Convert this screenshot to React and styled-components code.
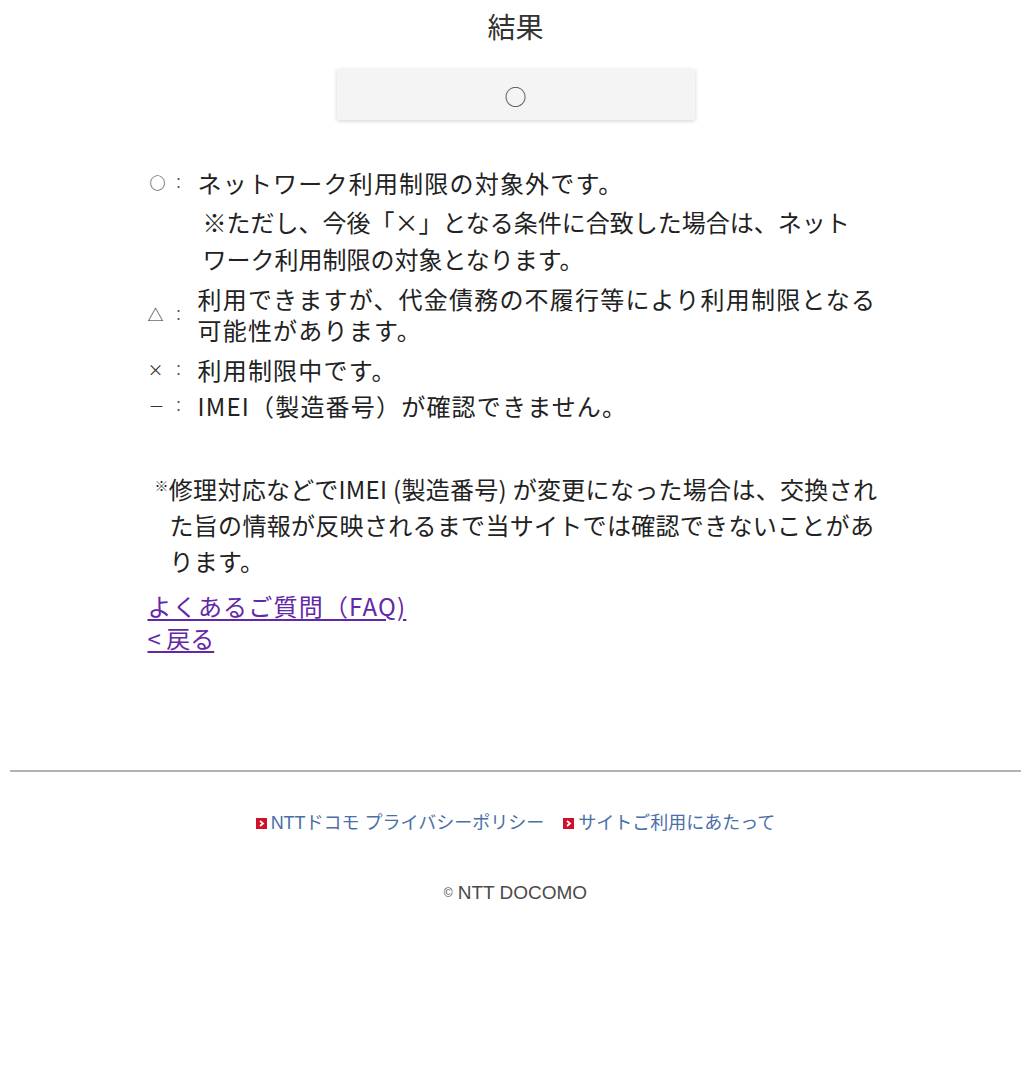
import React from "react";
import styled, { createGlobalStyle } from "styled-components";

const GlobalStyle = createGlobalStyle`
	body {
		margin: 0;
		background: #fff;
		color: #222;
		font-family: "Noto Sans CJK JP", sans-serif;
	}
`;

const Page = styled.div`
	padding-top: 6px;
	padding-bottom: 160px;
`;

const Title = styled.h1`
	margin: 0;
	font-size: 28px;
	line-height: 40px;
	font-weight: 400;
	text-align: center;
	color: #333;
`;

const ResultBox = styled.div`
	display: flex;
	align-items: center;
	justify-content: center;
	width: 358px;
	height: 51px;
	margin: 23px auto 0;
	background: #f4f4f4;
	box-shadow: 0 1px 4px rgba(0, 0, 0, 0.18);
	font-size: 22px;
	color: #444;
`;

const Content = styled.div`
	width: 736px;
	margin: 47px auto 0;
`;

const Item = styled.div`
	display: flex;
	align-items: center;
	margin-top: ${(p) => p.$gap || 0}px;
	font-size: 24px;
	line-height: 31px;
	letter-spacing: 1.2px;
`;

const Marker = styled.span`
	flex-shrink: 0;
	width: 24px;
	font-size: 16px;
	letter-spacing: 0;
	color: #333;
	padding-left: ${(p) => p.$shift || 0}px;
	box-sizing: border-box;
`;

const Colon = styled.span`
	flex-shrink: 0;
	width: 26px;
	font-size: 14px;
	letter-spacing: 0;
	color: #555;
`;

const Note = styled.p`
	margin: 5px 0 0;
	padding-left: 55px;
	font-size: 24px;
	line-height: 37px;
`;

const BottomNote = styled.p`
	margin: 50px 0 0;
	padding-left: 22px;
	text-indent: -15px;
	font-size: 24px;
	line-height: 36px;
	letter-spacing: 0.3px;
`;

const Mark = styled.span`
	font-size: 14px;
	vertical-align: 8px;
	line-height: 0;
`;

const TextLink = styled.a`
	display: block;
	width: fit-content;
	margin-top: ${(p) => p.$gap || 0}px;
	font-size: 24px;
	line-height: 32px;
	letter-spacing: ${(p) => p.$spacing || 0}px;
	color: #6228a8;
	text-decoration: underline;
	text-underline-offset: 3px;
`;

const Divider = styled.hr`
	margin: 116px 10px 0;
	border: none;
	border-top: 2px solid #b3b3b3;
`;

const FooterLinks = styled.div`
	display: flex;
	justify-content: center;
	gap: 19px;
	margin-top: 40px;
	font-family: "Liberation Sans", "Noto Sans CJK JP", sans-serif;
	font-size: 18px;
	line-height: 22px;
`;

const FooterLink = styled.a`
	display: flex;
	align-items: center;
	gap: 4px;
	color: #4a6ea8;
	text-decoration: none;
`;

const Copyright = styled.p`
	margin: 47px 0 0;
	text-align: center;
	font-family: "Liberation Sans", "Noto Sans CJK JP", sans-serif;
	font-size: 19px;
	line-height: 24px;
	color: #4a4a4a;
`;

const CopyMark = styled.span`
	font-size: 12px;
	margin-right: 5px;
	vertical-align: 2px;
`;

function ArrowIcon() {
	return (
		<svg width="11" height="11" viewBox="0 0 11 11" aria-hidden="true">
			<rect width="11" height="11" fill="#d0112b" />
			<path d="M4 3 L7 5.5 L4 8" stroke="#fff" strokeWidth="1.8" fill="none" />
		</svg>
	);
}

export default function App() {
	return (
		<Page>
			<GlobalStyle />
			<Title>結果</Title>
			<ResultBox>○</ResultBox>

			<Content>
				<Item>
					<Marker $shift={2}>○</Marker>
					<Colon>：</Colon>
					<span>ネットワーク利用制限の対象外です。</span>
				</Item>
				<Note>
					※ただし、今後「×」となる条件に合致した場合は、ネット
					<br />
					ワーク利用制限の対象となります。
				</Note>
				<Item $gap={6}>
					<Marker>△</Marker>
					<Colon>：</Colon>
					<span>
						利用できますが、代金債務の不履行等により利用制限となる
						<br />
						可能性があります。
					</span>
				</Item>
				<Item $gap={9}>
					<Marker>×</Marker>
					<Colon>：</Colon>
					<span>利用制限中です。</span>
				</Item>
				<Item $gap={5}>
					<Marker $shift={1}>－</Marker>
					<Colon>：</Colon>
					<span>IMEI（製造番号）が確認できません。</span>
				</Item>

				<BottomNote>
					<Mark>※</Mark>修理対応などでIMEI (製造番号) が変更になった場合は、交換され
					<br />
					た旨の情報が反映されるまで当サイトでは確認できないことがあ
					<br />
					ります。
				</BottomNote>

				<TextLink href="#" $gap={11} $spacing={1.2}>よくあるご質問（FAQ)</TextLink>
				<TextLink href="#">&lt; 戻る</TextLink>
			</Content>

			<Divider />

			<FooterLinks>
				<FooterLink href="#">
					<ArrowIcon />
					NTTドコモ プライバシーポリシー
				</FooterLink>
				<FooterLink href="#">
					<ArrowIcon />
					サイトご利用にあたって
				</FooterLink>
			</FooterLinks>

			<Copyright>
				<CopyMark>©</CopyMark>NTT DOCOMO
			</Copyright>
		</Page>
	);
}
